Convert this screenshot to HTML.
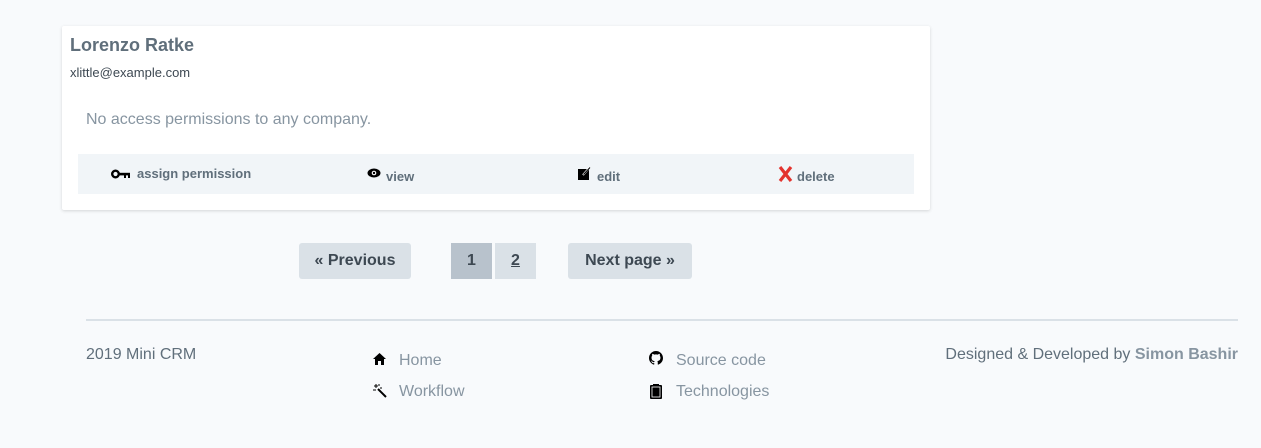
<!DOCTYPE html>
<html><head><style>
body{margin:0;width:1261px;height:448px;background:#f8fafc;font-family:"Liberation Sans",sans-serif;position:relative;overflow:hidden}
.a{position:absolute;white-space:nowrap}
.card{position:absolute;left:62px;top:26px;width:868px;height:184px;background:#fff;box-shadow:0 1px 3px rgba(0,0,0,.15);border-radius:2px}
.bar{position:absolute;left:16px;top:128px;width:836px;height:40px;background:#f1f5f8}
.act{font-size:13px;font-weight:bold;color:#606f7b}
.btn{position:absolute;background:#dae1e7;color:#3d4852;font-weight:bold;font-size:16px;text-align:center;line-height:36px;border-radius:3px;top:243px;height:36px}
.fl{font-size:16px;color:#8795a1}
svg{position:absolute}
</style></head><body>
<div class="card">
 <div class="a" style="left:8px;top:9px;font-size:18px;font-weight:bold;color:#606f7b">Lorenzo Ratke</div>
 <div class="a" style="left:8px;top:39px;font-size:13px;color:#3d4852">xlittle@example.com</div>
 <div class="a" style="left:24px;top:85px;font-size:16px;color:#8795a1">No access permissions to any company.</div>
 <div class="bar">
  <svg style="left:33px;top:15px" width="20" height="10" viewBox="0 0 20 10"><circle cx="4.5" cy="5" r="3.3" fill="none" stroke="#000" stroke-width="2.4"/><rect x="7" y="3.8" width="12" height="2.6" fill="#000"/><rect x="13" y="5" width="2" height="4" fill="#000"/><rect x="17" y="5" width="2" height="4" fill="#000"/></svg>
  <div class="a act" style="left:59px;top:12px">assign permission</div>
  <svg style="left:289px;top:14px" width="14" height="10" viewBox="0 0 14 10"><ellipse cx="7" cy="5" rx="6.5" ry="4.5" fill="#000"/><circle cx="7" cy="5" r="2.3" fill="#fff"/><circle cx="7" cy="5" r="1.2" fill="#000"/></svg>
  <div class="a act" style="left:308px;top:15px">view</div>
  <svg style="left:500px;top:13px" width="13" height="13" viewBox="0 0 13 13"><rect x="0" y="2" width="11" height="11" fill="#000"/><path d="M5 8 L12 0" stroke="#fff" stroke-width="2"/><path d="M5.5 7.5 L12 0.5" stroke="#000" stroke-width="1"/></svg>
  <div class="a act" style="left:519px;top:15px">edit</div>
  <svg style="left:700px;top:12px" width="15" height="16" viewBox="0 0 15 16"><path d="M2 1 L13 15 M13 1 L2 15" stroke="#e3342f" stroke-width="3.2"/></svg>
  <div class="a act" style="left:719px;top:15px">delete</div>
 </div>
</div>
<div class="btn" style="left:299px;width:112px">« Previous</div>
<div class="btn" style="left:451px;width:41px;background:#b8c2cc;border-radius:0">1</div>
<div class="btn" style="left:495px;width:41px;border-radius:0;text-decoration:underline">2</div>
<div class="btn" style="left:568px;width:124px">Next page »</div>
<div class="a" style="left:86px;top:319px;width:1152px;height:2px;background:#dae1e7"></div>
<div class="a" style="left:86px;top:346px;font-size:16px;color:#606f7b">2019 Mini CRM</div>
<svg style="left:373px;top:353px" width="13" height="12" viewBox="0 0 13 12"><path d="M6.5 0 L13 6 L11 6 L11 12 L8 12 L8 8 L5 8 L5 12 L2 12 L2 6 L0 6 Z" fill="#000"/></svg>
<div class="a fl" style="left:399px;top:352px">Home</div>
<svg style="left:373px;top:384px" width="14" height="14" viewBox="0 0 14 14"><path d="M5 5 L13 13" stroke="#000" stroke-width="2"/><path d="M3 0v4M1 2h4M0 6h3M6 0v2M7 4h2" stroke="#000" stroke-width="1"/></svg>
<div class="a fl" style="left:399px;top:383px">Workflow</div>
<svg style="left:649px;top:351px" width="14" height="14" viewBox="0 0 16 16"><path fill="#000" d="M8 0C3.6 0 0 3.6 0 8c0 3.5 2.3 6.5 5.5 7.6.4.1.5-.2.5-.4v-1.4c-2.2.5-2.7-1-2.7-1-.4-.9-.9-1.2-.9-1.2-.7-.5.1-.5.1-.5.8.1 1.2.8 1.2.8.7 1.2 1.9.9 2.3.7.1-.5.3-.9.5-1.1-1.8-.2-3.6-.9-3.6-4 0-.9.3-1.6.8-2.1-.1-.2-.4-1 .1-2.1 0 0 .7-.2 2.2.8.6-.2 1.3-.3 2-.3s1.4.1 2 .3c1.5-1 2.2-.8 2.2-.8.4 1.1.2 1.9.1 2.1.5.6.8 1.3.8 2.1 0 3.1-1.9 3.7-3.6 3.9.3.3.5.8.5 1.5v2.2c0 .2.1.5.6.4C13.7 14.5 16 11.5 16 8c0-4.4-3.6-8-8-8z"/></svg>
<div class="a fl" style="left:676px;top:352px">Source code</div>
<svg style="left:650px;top:384px" width="12" height="15" viewBox="0 0 12 15"><rect x="0" y="1" width="12" height="14" rx="1" fill="#000"/><rect x="3" y="0" width="6" height="2" fill="#000"/><rect x="2" y="3" width="8" height="10" fill="#000" stroke="#fff" stroke-width="0.8"/></svg>
<div class="a fl" style="left:676px;top:383px">Technologies</div>
<div class="a" style="right:23px;top:346px;font-size:16px;color:#606f7b">Designed &amp; Developed by <b style="color:#8795a1">Simon Bashir</b></div>
</body></html>
